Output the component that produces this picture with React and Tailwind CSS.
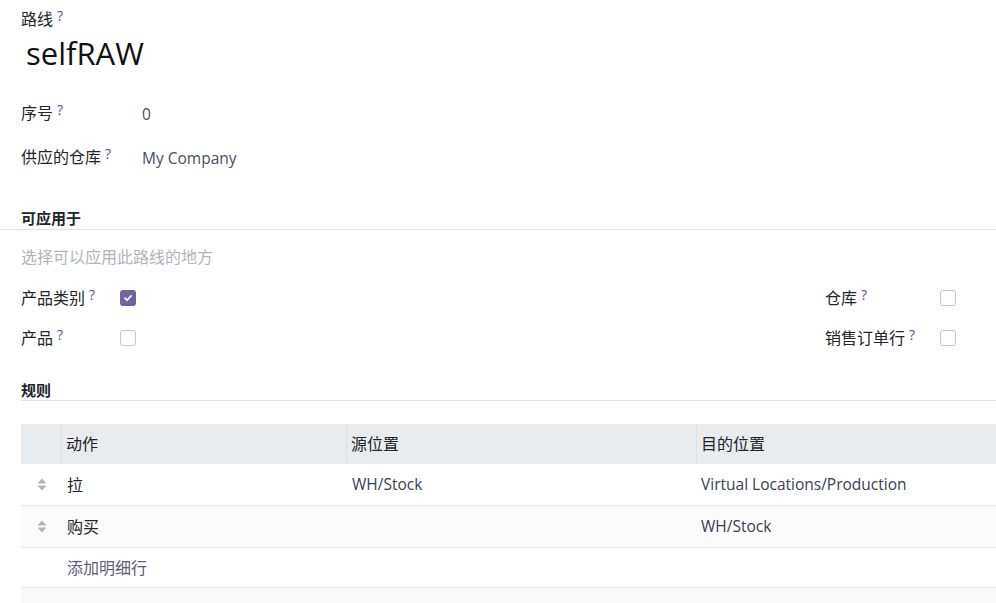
import React from "react";

const F = { fontFamily: '"Open Sans", "Noto Sans CJK SC", sans-serif' };

function Q() {
  return <sup className="ml-[4px] text-[14px] text-[#57528a] relative top-[-3px]">?</sup>;
}

function Box({ checked }) {
  return checked ? (
    <span className="inline-flex w-4 h-4 rounded-[3px] bg-[#71639e] items-center justify-center">
      <svg width="10" height="10" viewBox="0 0 10 10">
        <path d="M2 5.2 L4.1 7.2 L8 3" stroke="white" strokeWidth="1.8" fill="none" strokeLinecap="round" strokeLinejoin="round" />
      </svg>
    </span>
  ) : (
    <span className="inline-block w-4 h-4 rounded-[3px] border border-[#c4c7cc] bg-white" />
  );
}

function Handle() {
  return (
    <svg width="10" height="13" viewBox="0 0 10 13">
      <path d="M5 0.5 L9.5 5.5 L0.5 5.5 Z" fill="#adb5bd" />
      <path d="M5 12.5 L9.5 7.5 L0.5 7.5 Z" fill="#adb5bd" />
    </svg>
  );
}

export default function App() {
  return (
    <div className="w-[996px] h-[603px] overflow-hidden bg-white text-[#212529] text-[16px]" style={F}>
      <div className="pl-[21px]">
        <div className="pt-[8px] h-[30px] leading-[22px] flex items-center">
          <span>路线</span>
          <Q />
        </div>
        <div className="mt-[3px] ml-[5px] text-[31px] leading-[40px] text-[#111]">selfRAW</div>

        <div className="mt-[29px] flex items-center h-[22px]">
          <div className="w-[121px] flex items-center">
            <span>序号</span>
            <Q />
          </div>
          <div className="text-[#495057] text-[15.5px] pt-[4px]">0</div>
        </div>
        <div className="mt-[22px] flex items-center h-[22px]">
          <div className="w-[121px] flex items-center">
            <span>供应的仓库</span>
            <Q />
          </div>
          <div className="text-[#495057] text-[15.5px] pt-[4px]">My Company</div>
        </div>
      </div>

      <div className="mt-[40px] border-b border-[#dee2e6]">
        <div className="pl-[21px] font-bold text-[15px] leading-[20px] pb-[1px]">可应用于</div>
      </div>
      <div className="pl-[21px]">
        <div className="mt-[16px] text-[#adb5bd] leading-[22px]">选择可以应用此路线的地方</div>
        <div className="mt-[19px] flex items-center h-[22px]">
          <div className="w-[99px] flex items-center">
            <span>产品类别</span>
            <Q />
          </div>
          <Box checked />
          <div className="ml-[689px] w-[115px] flex items-center">
            <span>仓库</span>
            <Q />
          </div>
          <Box />
        </div>
        <div className="mt-[18px] flex items-center h-[22px]">
          <div className="w-[99px] flex items-center">
            <span>产品</span>
            <Q />
          </div>
          <Box />
          <div className="ml-[689px] w-[115px] flex items-center">
            <span>销售订单行</span>
            <Q />
          </div>
          <Box />
        </div>

        <div className="mt-[31px] border-b border-[#dee2e6] font-bold text-[15px] leading-[20px]">规则</div>

        <div className="mt-[23px]">
          <div className="flex h-[40px] bg-[#e9ecef] items-center">
            <div className="w-[41px] h-full border-r border-[#dcdfe3]" />
            <div className="w-[285px] h-full border-r border-[#dcdfe3] pl-[4px] flex items-center">动作</div>
            <div className="w-[350px] h-full border-r border-[#dcdfe3] pl-[4px] flex items-center">源位置</div>
            <div className="flex-1 h-full pl-[4px] flex items-center">目的位置</div>
          </div>
          <div className="flex h-[42px] items-center border-b border-[#e5e7ea] text-[#212529]">
            <div className="w-[41px] flex justify-center pl-[1px]"><Handle /></div>
            <div className="w-[285px] pl-[5px]">拉</div>
            <div className="w-[350px] pl-[5px] text-[15.5px] text-[#374151]">WH/Stock</div>
            <div className="flex-1 pl-[4px] text-[15.5px] text-[#374151]">Virtual Locations/Production</div>
          </div>
          <div className="flex h-[42px] items-center border-b border-[#e5e7ea] bg-[#fbfbfb]">
            <div className="w-[41px] flex justify-center pl-[1px]"><Handle /></div>
            <div className="w-[285px] pl-[5px]">购买</div>
            <div className="w-[350px] pl-[5px]" />
            <div className="flex-1 pl-[4px] text-[15.5px] text-[#374151]">WH/Stock</div>
          </div>
          <div className="flex h-[40px] items-center border-b border-[#e5e7ea]">
            <div className="w-[41px]" />
            <div className="pl-[5px] text-[#5f5a85]">添加明细行</div>
          </div>
          <div className="h-[40px] bg-[#f9f9f9]" />
        </div>
      </div>
    </div>
  );
}
